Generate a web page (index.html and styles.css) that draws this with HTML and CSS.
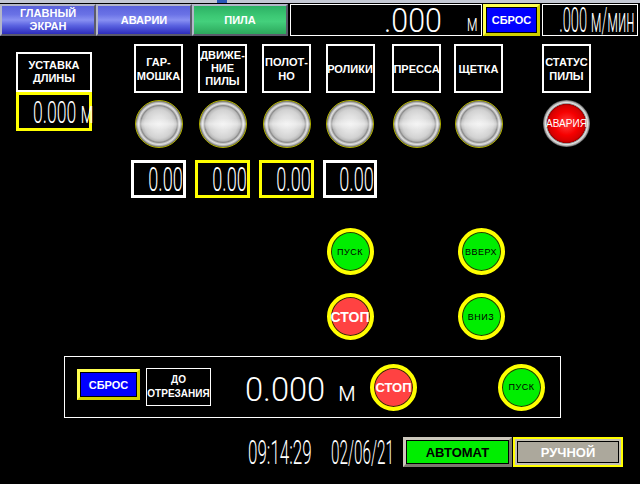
FILE: index.html
```html
<!DOCTYPE html>
<html lang="ru">
<head>
<meta charset="utf-8">
<title>Пила</title>
<link rel="stylesheet" href="styles.css">
</head>
<body>
<div class="screen">
  <div class="strip"><span class="strip-mark"></span></div>
  <div class="topbar">
    <div class="nav nav-blue">ГЛАВНЫЙ<br>ЭКРАН</div>
    <div class="nav nav-blue">АВАРИИ</div>
    <div class="nav nav-green">ПИЛА</div>
    <div class="disp disp-len"><span class="lcd lcd-len">.000</span><span class="lcd lcd-unit">м</span></div>
    <div class="reset reset-top">СБРОС</div>
    <div class="disp disp-speed"><span class="lcd lcd-speed">.000 м/мин</span></div>
  </div>

  <div class="main">
    <div class="setpoint">
      <div class="setpoint-label">УСТАВКА<br>ДЛИНЫ</div>
      <div class="setpoint-value"><span class="lcd lcd-set">0.000 м</span></div>
    </div>

    <div class="hdr c1">ГАР-<br>МОШКА</div>
    <div class="hdr hdr-3 c2">ДВИЖЕ-<br>НИЕ<br>ПИЛЫ</div>
    <div class="hdr c3">ПОЛОТ-<br>НО</div>
    <div class="hdr c4">РОЛИКИ</div>
    <div class="hdr c5">ПРЕССА</div>
    <div class="hdr c6">ЩЕТКА</div>
    <div class="hdr c7">СТАТУС<br>ПИЛЫ</div>

    <div class="lamp c1"></div>
    <div class="lamp c2"></div>
    <div class="lamp c3"></div>
    <div class="lamp c4"></div>
    <div class="lamp c5"></div>
    <div class="lamp c6"></div>
    <div class="lamp-alarm c7">АВАРИЯ</div>

    <div class="val c1"><span class="lcd lcd-val">0.00</span></div>
    <div class="val val-y c2"><span class="lcd lcd-val">0.00</span></div>
    <div class="val val-y c3"><span class="lcd lcd-val">0.00</span></div>
    <div class="val c4"><span class="lcd lcd-val">0.00</span></div>

    <div class="cbtn go c4 r1">ПУСК</div>
    <div class="cbtn go c6 r1 shift">ВВЕРХ</div>
    <div class="cbtn stop c4 r2">СТОП</div>
    <div class="cbtn go c6 r2 shift">ВНИЗ</div>
  </div>

  <div class="panel">
    <div class="reset reset-panel">СБРОС</div>
    <div class="cut-label">ДО<br>ОТРЕЗАНИЯ</div>
    <div class="cut-value"><span class="lcd lcd-cut">0.000</span><span class="lcd cut-unit">м</span></div>
    <div class="cbtn stop stop-panel">СТОП</div>
    <div class="cbtn go go-panel">ПУСК</div>
  </div>

  <div class="statusbar">
    <div class="clock"><span class="lcd lcd-clock">09:14:29</span></div>
    <div class="clock clock-date"><span class="lcd lcd-clock lcd-date">02/06/21</span></div>
    <div class="mode mode-auto">АВТОМАТ</div>
    <div class="mode mode-manual">РУЧНОЙ</div>
  </div>
</div>
</body>
</html>
```

FILE: styles.css
```css
html, body {
  margin: 0;
  padding: 0;
  background: #000;
}

body {
  font-family: "Liberation Sans", Arial, sans-serif;
  color: #fff;
}

.screen {
  width: 640px;
  height: 484px;
  overflow: hidden;
  background: #000;
}

/* window title remnant */
.strip {
  height: 3px;
  background: #c4c8d4;
  display: flex;
  padding-left: 217px;
}

.strip-mark {
  width: 10px;
  background: #2a58b8;
}

/* top bar */
.topbar {
  display: flex;
  height: 32px;
  margin-top: 1px;
}

.nav {
  width: 96px;
  box-sizing: border-box;
  border: 2px solid;
  border-color: #b4b6c8 #5a5a6a #5a5a6a #b4b6c8;
  display: flex;
  align-items: center;
  justify-content: center;
  text-align: center;
  font-weight: bold;
  font-size: 11px;
  line-height: 13px;
  color: #fff;
}

.nav-blue {
  background: linear-gradient(#5a62dc, #6a72e6 30%, #8890f2 50%, #5a62e0 70%, #2c2cbc);
}

.nav-green {
  background: linear-gradient(#2cb064, #3cc874 35%, #44d07c 55%, #2ca85c);
}

.disp {
  box-sizing: border-box;
  border: 1px solid #fff;
  display: flex;
  align-items: flex-end;
  justify-content: flex-end;
}

.disp-len {
  width: 192px;
  margin-left: 2px;
  padding-right: 3px;
}

.disp-speed {
  width: 96px;
  margin-left: 2px;
  padding-right: 2px;
}

.lcd {
  display: inline-block;
  font-family: Roboto, "DejaVu Sans", sans-serif;
  font-weight: 300;
  line-height: 1;
  white-space: pre;
  color: #fff;
}

.lcd-len {
  font-size: 33px;
  line-height: 28px;
  transform: scaleX(0.92);
  transform-origin: right bottom;
}

.lcd-unit {
  font-size: 24px;
  line-height: 24px;
  margin-left: 19px;
  transform: scaleX(0.62);
  transform-origin: right bottom;
}

.lcd-speed {
  font-size: 35px;
  line-height: 28px;
  transform: scaleX(0.42);
  transform-origin: right bottom;
}

.reset {
  box-sizing: border-box;
  border: 3px solid;
  border-color: #ffff50 #d0d000 #d0d000 #ffff50;
  background: #0000ff;
  box-shadow: inset 0 0 0 1px #000;
  color: #fff;
  font-weight: bold;
  font-size: 11px;
  display: flex;
  align-items: center;
  justify-content: center;
}

.reset-top {
  width: 57px;
  margin-left: 1px;
}

/* main grid */
.main {
  display: grid;
  grid-template-columns: 16px 76px 39px 55px 9px 55px 9px 55px 9px 54px 15px 49px 13px 49px 39px 49px;
  grid-template-rows: 49px 7px 48px 12px 38px 30px 47px 18px 47px;
  padding-top: 8px;
}

.c1 { grid-column: 4; }
.c2 { grid-column: 6; }
.c3 { grid-column: 8; }
.c4 { grid-column: 10; }
.c5 { grid-column: 12; }
.c6 { grid-column: 14; }
.c7 { grid-column: 16; }
.r1 { grid-row: 7; }
.r2 { grid-row: 9; }

.setpoint {
  grid-column: 2;
  grid-row: 1 / span 5;
  margin-top: 8px;
  display: flex;
  flex-direction: column;
  align-self: start;
}

.setpoint-label {
  height: 40px;
  box-sizing: border-box;
  border: 2px solid #fff;
  display: flex;
  align-items: center;
  justify-content: center;
  text-align: center;
  font-weight: bold;
  font-size: 11px;
  line-height: 13px;
}

.setpoint-value {
  height: 39px;
  box-sizing: border-box;
  border: 3px solid #ffff00;
  padding-left: 14px;
  display: flex;
  align-items: center;
}

.lcd-set {
  font-size: 32px;
  transform: scaleX(0.55);
  transform-origin: left center;
}

.hdr {
  grid-row: 1;
  justify-self: center;
  width: 49px;
  height: 49px;
  box-sizing: border-box;
  border: 2px solid #fff;
  display: flex;
  align-items: center;
  justify-content: center;
  text-align: center;
  font-weight: bold;
  font-size: 11px;
  line-height: 14px;
}

.hdr-3 {
  line-height: 13px;
}

.lamp {
  grid-row: 3;
  justify-self: center;
  width: 48px;
  height: 48px;
  box-sizing: border-box;
  border-radius: 50%;
  border: 1px solid #b0b000;
  background:
    linear-gradient(rgba(255,255,255,0) 38%, rgba(255,255,255,0.4) 50%, rgba(255,255,255,0) 62%),
    radial-gradient(circle closest-side at 50% 50%, #eeeeee 0, #e2e2e2 35%, #d2d2d2 62%, #bababa 74%, #8a8a8a 80%, #c4c4c4 85%, #e0e0e0 89%, #a8a8a8 95%, #646464 100%);
}

.lamp-alarm {
  grid-row: 3;
  justify-self: center;
  width: 47px;
  height: 47px;
  border-radius: 50%;
  background: radial-gradient(circle closest-side at 50% 50%, #ff4040 0, #f60000 50%, #d40000 76%, #a00000 82%, #8a8a8a 84%, #e6e6e6 89%, #b0b0b0 94%, #5a5a5a 100%);
  display: flex;
  align-items: center;
  justify-content: center;
  font-size: 10px;
  color: #fff;
}

.val {
  grid-row: 5;
  box-sizing: border-box;
  border: 3px solid #fff;
  display: flex;
  align-items: center;
  justify-content: flex-end;
}

.val-y {
  border-color: #ffff00;
}

.lcd-val {
  font-size: 33px;
  transform: scaleX(0.55);
  transform-origin: right center;
}

.cbtn {
  justify-self: center;
  width: 47px;
  height: 47px;
  box-sizing: border-box;
  border-radius: 50%;
  border: 4px solid #ffff00;
  box-shadow: inset 0 0 0 1px #303000;
  display: flex;
  align-items: center;
  justify-content: center;
  font-size: 9px;
  letter-spacing: 0.5px;
  color: #000;
}

.go {
  background: #00ee00;
}

.stop {
  background: #ff4242;
  color: #fff;
  font-weight: bold;
  font-size: 14px;
  letter-spacing: 0;
}

.shift {
  margin-left: 5px;
}

/* bottom panel */
.panel {
  margin: 16px 0 0 64px;
  width: 497px;
  height: 62px;
  box-sizing: border-box;
  border: 1px solid #fff;
  display: flex;
  align-items: center;
}

.reset-panel {
  width: 63px;
  height: 31px;
  margin-left: 12px;
  margin-bottom: 5px;
}

.cut-label {
  width: 65px;
  height: 38px;
  margin-left: 6px;
  box-sizing: border-box;
  border: 1px solid #fff;
  display: flex;
  align-items: center;
  justify-content: center;
  text-align: center;
  font-weight: bold;
  font-size: 10px;
  line-height: 14px;
}

.cut-value {
  width: 111px;
  margin-left: 34px;
  margin-top: 4px;
  display: flex;
  align-items: baseline;
  justify-content: space-between;
}

.lcd-cut {
  font-size: 34px;
  transform: scaleX(0.96);
  transform-origin: left center;
}

.cut-unit {
  font-size: 27px;
  transform: scaleX(0.9);
  transform-origin: right center;
}

.stop-panel {
  margin-left: 14px;
  font-size: 13px;
}

.go-panel {
  margin-left: 81px;
}

/* status bar */
.statusbar {
  display: flex;
  align-items: center;
  height: 30px;
  margin: 19px 0 0 248px;
}

.clock {
  width: 83px;
}

.clock-date {
  width: 72px;
}

.lcd-clock {
  font-size: 34px;
  transform: scaleX(0.5);
  transform-origin: left center;
}

.lcd-date {
  transform: scaleX(0.45);
}

.mode {
  box-sizing: border-box;
  height: 30px;
  display: flex;
  align-items: center;
  justify-content: center;
  font-weight: bold;
  font-size: 13px;
}

.mode-auto {
  width: 109px;
  border: 3px solid;
  border-color: #ccc8bc #7c786e #7c786e #ccc8bc;
  box-shadow: inset 0 0 0 1px #000;
  background: #00ee00;
  color: #000;
}

.mode-manual {
  width: 110px;
  margin-left: 1px;
  border: 2px solid #ffff00;
  box-shadow: inset 0 0 0 2px #c4c0b4, inset 0 0 0 3px #000;
  background: #aca89c;
  color: #fff;
}
```
